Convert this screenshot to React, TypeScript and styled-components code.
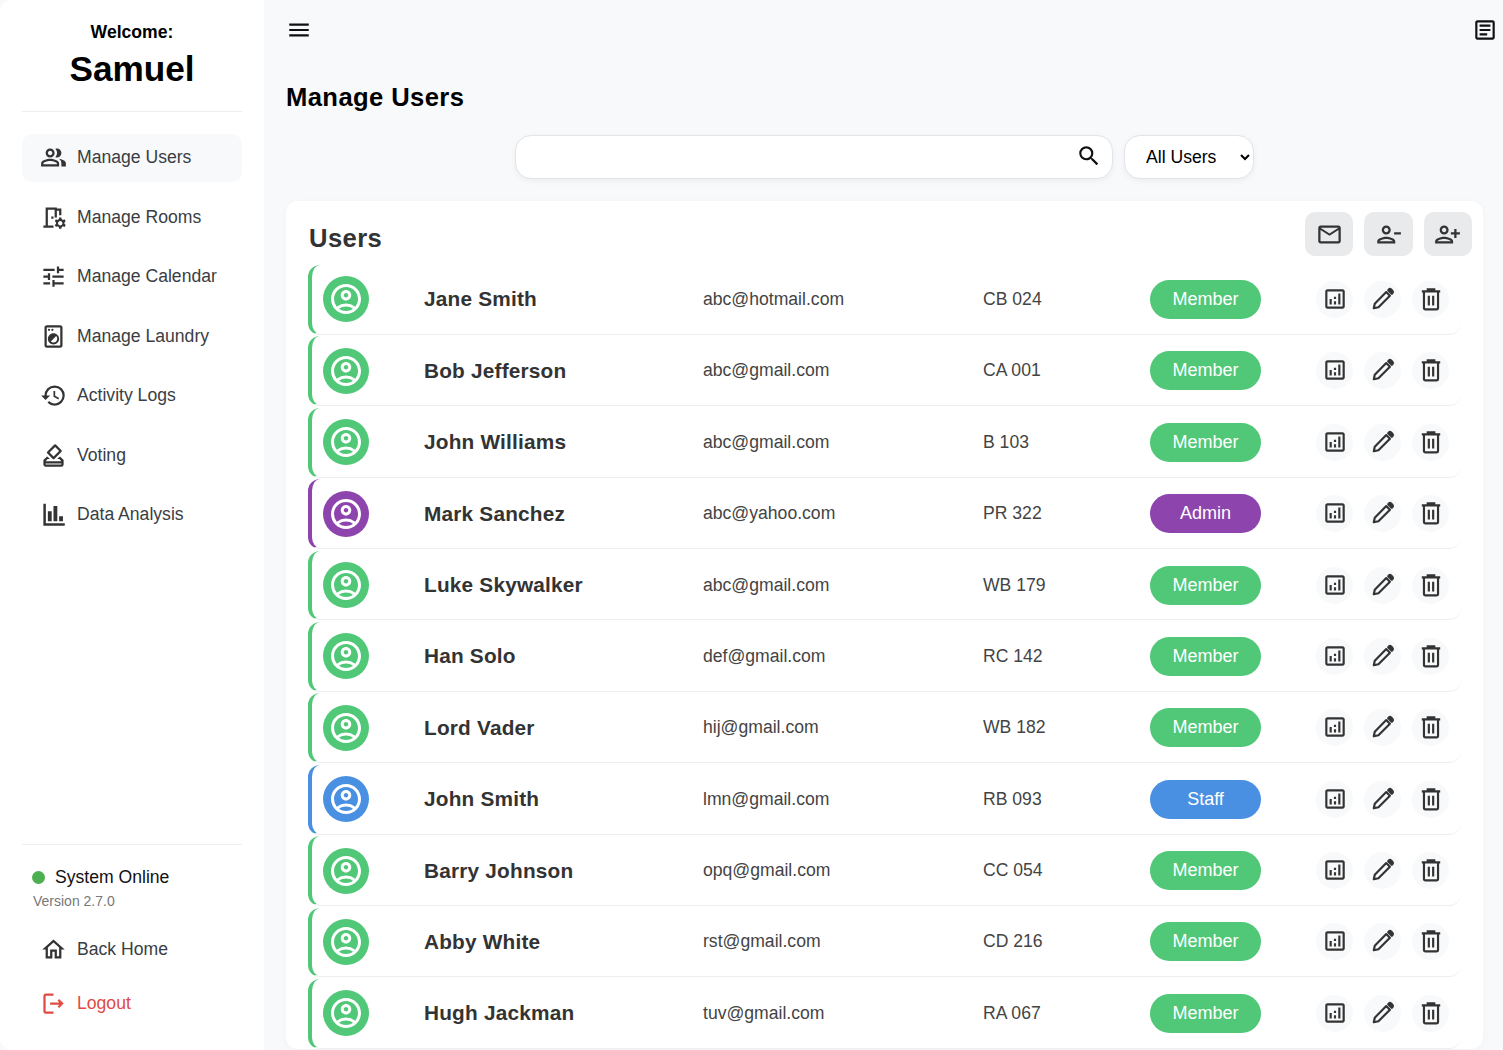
import React from "react";
import styled, { createGlobalStyle } from "styled-components";
import {
  MdMenu,
  MdOutlineArticle,
  MdSearch,
  MdOutlinePeopleAlt,
  MdOutlineRoomPreferences,
  MdOutlineTune,
  MdOutlineLocalLaundryService,
  MdHistory,
  MdOutlineHowToVote,
  MdOutlineHome,
  MdOutlineLogout,
  MdMailOutline,
  MdOutlinePersonRemove,
  MdOutlinePersonAdd,
  MdOutlineAnalytics,
  MdOutlineAccountCircle,
} from "react-icons/md";

const GlobalStyle = createGlobalStyle`
  html, body {
    margin: 0;
    height: 100%;
    overflow: hidden;
    background: #f8f9fb;
    font-family: "Liberation Sans", Arial, sans-serif;
  }
  * { box-sizing: border-box; }
`;

const ROLE_COLORS: Record<string, string> = {
  Member: "#50c878",
  Admin: "#8e44ad",
  Staff: "#4a90e2",
};

const users = [
  { name: "Jane Smith", email: "abc@hotmail.com", room: "CB 024", role: "Member" },
  { name: "Bob Jefferson", email: "abc@gmail.com", room: "CA 001", role: "Member" },
  { name: "John Williams", email: "abc@gmail.com", room: "B 103", role: "Member" },
  { name: "Mark Sanchez", email: "abc@yahoo.com", room: "PR 322", role: "Admin" },
  { name: "Luke Skywalker", email: "abc@gmail.com", room: "WB 179", role: "Member" },
  { name: "Han Solo", email: "def@gmail.com", room: "RC 142", role: "Member" },
  { name: "Lord Vader", email: "hij@gmail.com", room: "WB 182", role: "Member" },
  { name: "John Smith", email: "lmn@gmail.com", room: "RB 093", role: "Staff" },
  { name: "Barry Johnson", email: "opq@gmail.com", room: "CC 054", role: "Member" },
  { name: "Abby White", email: "rst@gmail.com", room: "CD 216", role: "Member" },
  { name: "Hugh Jackman", email: "tuv@gmail.com", room: "RA 067", role: "Member" },
];

const BarsIcon = () => (
  <svg width="1em" height="1em" viewBox="0 0 24 24" fill="#333">
    <path d="M3 2.5h2.2v17.3H22V22H3z" />
    <path d="M7 9h3.4v9H7zM12 4.5h3.4V18H12zM17 13.5h3.4V18H17z" />
  </svg>
);

const PencilIcon = () => (
  <svg width="1em" height="1em" viewBox="0 0 24 24" fill="none" stroke="#333" strokeWidth="2" strokeLinejoin="round">
    <path d="M3.5 20.5l.9-4.2L15 5.6l3.4 3.4L7.8 19.6z" />
    <path d="M16.8 3.9l.6-.6a1.5 1.5 0 0 1 2.1 0l1.2 1.2a1.5 1.5 0 0 1 0 2.1l-.6.6z" fill="#333" />
  </svg>
);

const TrashIcon = () => (
  <svg width="1em" height="1em" viewBox="0 0 24 24" fill="none" stroke="#333" strokeWidth="2">
    <path d="M3.5 5h17M9 5V3h6v2" />
    <path d="M5.5 5v15a1.5 1.5 0 0 0 1.5 1.5h10a1.5 1.5 0 0 0 1.5-1.5V5" />
    <path d="M10 9v9M14 9v9" />
  </svg>
);

const navItems = [
  { label: "Manage Users", icon: <MdOutlinePeopleAlt />, active: true },
  { label: "Manage Rooms", icon: <MdOutlineRoomPreferences /> },
  { label: "Manage Calendar", icon: <MdOutlineTune /> },
  { label: "Manage Laundry", icon: <MdOutlineLocalLaundryService /> },
  { label: "Activity Logs", icon: <MdHistory /> },
  { label: "Voting", icon: <MdOutlineHowToVote /> },
  { label: "Data Analysis", icon: <BarsIcon /> },
];

export default function App() {
  return (
    <>
      <GlobalStyle />
      <Layout>
        <Sidebar>
          <Welcome>
            <WelcomeLabel>Welcome:</WelcomeLabel>
            <WelcomeName>Samuel</WelcomeName>
          </Welcome>
          <Nav>
            {navItems.map((item) => (
              <NavItem key={item.label} $active={item.active}>
                <NavIcon>{item.icon}</NavIcon>
                {item.label}
              </NavItem>
            ))}
          </Nav>
          <SidebarFooter>
            <StatusRow>
              <StatusDot />
              System Online
            </StatusRow>
            <Version>Version 2.7.0</Version>
            <FooterLinks>
              <NavItem>
                <NavIcon><MdOutlineHome /></NavIcon>
                Back Home
              </NavItem>
              <NavItem $danger>
                <NavIcon $danger><MdOutlineLogout /></NavIcon>
                Logout
              </NavItem>
            </FooterLinks>
          </SidebarFooter>
        </Sidebar>
        <Main>
          <TopBar>
            <MdMenu size={26} color="#111" />
            <MdOutlineArticle size={26} color="#111" />
          </TopBar>
          <PageTitle>Manage Users</PageTitle>
          <SearchRow>
            <SearchBox>
              <SearchInput />
              <MdSearch size={26} color="#111" />
            </SearchBox>
            <RoleSelect defaultValue="All Users">
              <option>All Users</option>
              <option>Member</option>
              <option>Staff</option>
              <option>Admin</option>
            </RoleSelect>
          </SearchRow>
          <Card>
            <CardHeader>
              <CardTitle>Users</CardTitle>
              <CardActions>
                <SquareButton><MdMailOutline /></SquareButton>
                <SquareButton><MdOutlinePersonRemove /></SquareButton>
                <SquareButton $flip><MdOutlinePersonAdd /></SquareButton>
              </CardActions>
            </CardHeader>
            {users.map((user) => (
              <Row key={user.name} $color={ROLE_COLORS[user.role]}>
                <Avatar $color={ROLE_COLORS[user.role]}>
                  <MdOutlineAccountCircle />
                </Avatar>
                <Name>{user.name}</Name>
                <Cell>{user.email}</Cell>
                <Cell>{user.room}</Cell>
                <Badge $color={ROLE_COLORS[user.role]}>{user.role}</Badge>
                <RowActions>
                  <RoundButton><MdOutlineAnalytics /></RoundButton>
                  <RoundButton><PencilIcon /></RoundButton>
                  <RoundButton><TrashIcon /></RoundButton>
                </RowActions>
              </Row>
            ))}
          </Card>
        </Main>
      </Layout>
    </>
  );
}

const Layout = styled.div`
  display: flex;
  height: 100vh;
  overflow: hidden;
`;

const Sidebar = styled.aside`
  display: flex;
  flex-direction: column;
  flex: 0 0 264px;
  height: 100%;
  padding: 0 22px;
  background: #fff;
  border-radius: 12px 0 0 12px;
`;

const Welcome = styled.div`
  display: flex;
  flex-direction: column;
  align-items: center;
  height: 112px;
  padding-top: 22px;
  border-bottom: 1px solid #eceef0;
  color: #000;
  font-weight: 700;
`;

const WelcomeLabel = styled.div`
  font-size: 17.6px;
  line-height: 20px;
`;

const WelcomeName = styled.div`
  font-size: 35.2px;
  line-height: 42px;
  margin-top: 6px;
`;

const Nav = styled.nav`
  display: flex;
  flex-direction: column;
  gap: 11.5px;
  margin-top: 22px;
`;

const NavItem = styled.div<{ $active?: boolean; $danger?: boolean }>`
  display: flex;
  align-items: center;
  gap: 12px;
  height: 48px;
  padding-left: 19px;
  padding-bottom: 1px;
  border-radius: 10px;
  font-size: 17.6px;
  color: ${({ $danger }) => ($danger ? "#e04b45" : "#3a3d44")};
  background: ${({ $active }) => ($active ? "#f8f9fb" : "transparent")};
`;

const NavIcon = styled.span<{ $danger?: boolean }>`
  display: flex;
  align-items: center;
  justify-content: center;
  width: 24px;
  height: 24px;
  color: ${({ $danger }) => ($danger ? "#e04b45" : "#333")};
  font-size: 27px;

  svg {
    flex-shrink: 0;
  }
`;

const SidebarFooter = styled.div`
  margin-top: auto;
  border-top: 1px solid #eceef0;
  padding-top: 22px;
  height: 206px;
`;

const StatusRow = styled.div`
  display: flex;
  align-items: center;
  gap: 10px;
  padding-left: 10px;
  font-size: 17.6px;
  line-height: 21px;
  color: #111;
`;

const StatusDot = styled.span`
  width: 13px;
  height: 13px;
  border-radius: 50%;
  background: #4caf50;
`;

const Version = styled.div`
  margin-top: 5px;
  padding-left: 11px;
  font-size: 14px;
  line-height: 16px;
  color: #777;
`;

const FooterLinks = styled.div`
  display: flex;
  flex-direction: column;
  gap: 6px;
  margin-top: 17px;
`;

const Main = styled.main`
  display: flex;
  flex-direction: column;
  flex: 1;
  min-width: 0;
  padding: 0 20px 0 22px;
`;

const TopBar = styled.header`
  display: flex;
  align-items: center;
  justify-content: space-between;
  height: 60px;
  margin-right: -15px;
`;

const PageTitle = styled.h1`
  margin: 7px 0 0;
  font-size: 25.6px;
  line-height: 60px;
  height: 68px;
  font-weight: 700;
  color: #000;
  letter-spacing: 0.4px;
`;

const SearchRow = styled.div`
  display: flex;
  justify-content: center;
  gap: 11px;
`;

const SearchBox = styled.div`
  display: flex;
  align-items: center;
  width: 598px;
  height: 44px;
  padding: 0 10px 2px 16px;
  background: #fff;
  border: 1px solid #e2e4e8;
  border-radius: 16px;
  box-shadow: 0 2px 6px rgba(0, 0, 0, 0.05);
`;

const SearchInput = styled.input`
  flex: 1;
  border: none;
  outline: none;
  background: transparent;
  font-size: 18px;
`;

const RoleSelect = styled.select`
  width: 130px;
  height: 44px;
  padding-left: 17px;
  background: #fff;
  border: 1px solid #e2e4e8;
  border-radius: 16px;
  box-shadow: 0 2px 6px rgba(0, 0, 0, 0.05);
  font-family: inherit;
  font-size: 17.6px;
  color: #000;
`;

const Card = styled.section`
  margin-top: 22px;
  padding: 11px 11px 0 22px;
  background: #fff;
  border-radius: 12px;
  box-shadow: 0 2px 8px rgba(0, 0, 0, 0.03);
`;

const CardHeader = styled.div`
  display: flex;
  justify-content: space-between;
  height: 51.5px;
`;

const CardTitle = styled.h2`
  margin: 10px 0 0 1px;
  font-size: 25.6px;
  line-height: 32px;
  font-weight: 700;
  color: #333;
  letter-spacing: 0.4px;
`;

const CardActions = styled.div`
  display: flex;
  gap: 11px;
`;

const SquareButton = styled.button<{ $flip?: boolean }>`
  display: flex;
  align-items: center;
  justify-content: center;
  width: 48.3px;
  height: 44px;
  padding: 0;
  border: none;
  border-radius: 10px;
  background: #e9eaec;
  color: #333;
  font-size: 27px;

  svg {
    transform: ${({ $flip }) => ($flip ? "scaleX(-1)" : "none")};
  }
`;

const Row = styled.div<{ $color: string }>`
  display: grid;
  grid-template-columns: 101px 279px 280px 167px 111px 1fr;
  align-items: center;
  width: 1153px;
  height: 69.9px;
  margin-top: 1.5px;
  padding-left: 11px;
  border-left: 4px solid ${({ $color }) => $color};
  border-bottom: 1px solid #eceef0;
  border-radius: 12px;
`;

const Avatar = styled.div<{ $color: string }>`
  display: flex;
  align-items: center;
  justify-content: center;
  width: 46px;
  height: 46px;
  border-radius: 50%;
  background: ${({ $color }) => $color};
  color: #fff;
  font-size: 36px;
`;

const Name = styled.div`
  font-size: 20.8px;
  font-weight: 700;
  color: #333;
  letter-spacing: 0.2px;
`;

const Cell = styled.div`
  font-size: 17.6px;
  color: #444;
`;

const Badge = styled.div<{ $color: string }>`
  display: flex;
  align-items: center;
  justify-content: center;
  height: 39px;
  border-radius: 20px;
  background: ${({ $color }) => $color};
  color: #fff;
  font-size: 18px;
`;

const RowActions = styled.div`
  display: flex;
  justify-content: flex-end;
  gap: 11px;
  padding-right: 12px;
`;

const RoundButton = styled.button`
  display: flex;
  align-items: center;
  justify-content: center;
  width: 37px;
  height: 37px;
  padding: 0 0 1px;
  border: none;
  border-radius: 50%;
  background: #f8f9fa;
  color: #333;
  font-size: 26px;
`;
